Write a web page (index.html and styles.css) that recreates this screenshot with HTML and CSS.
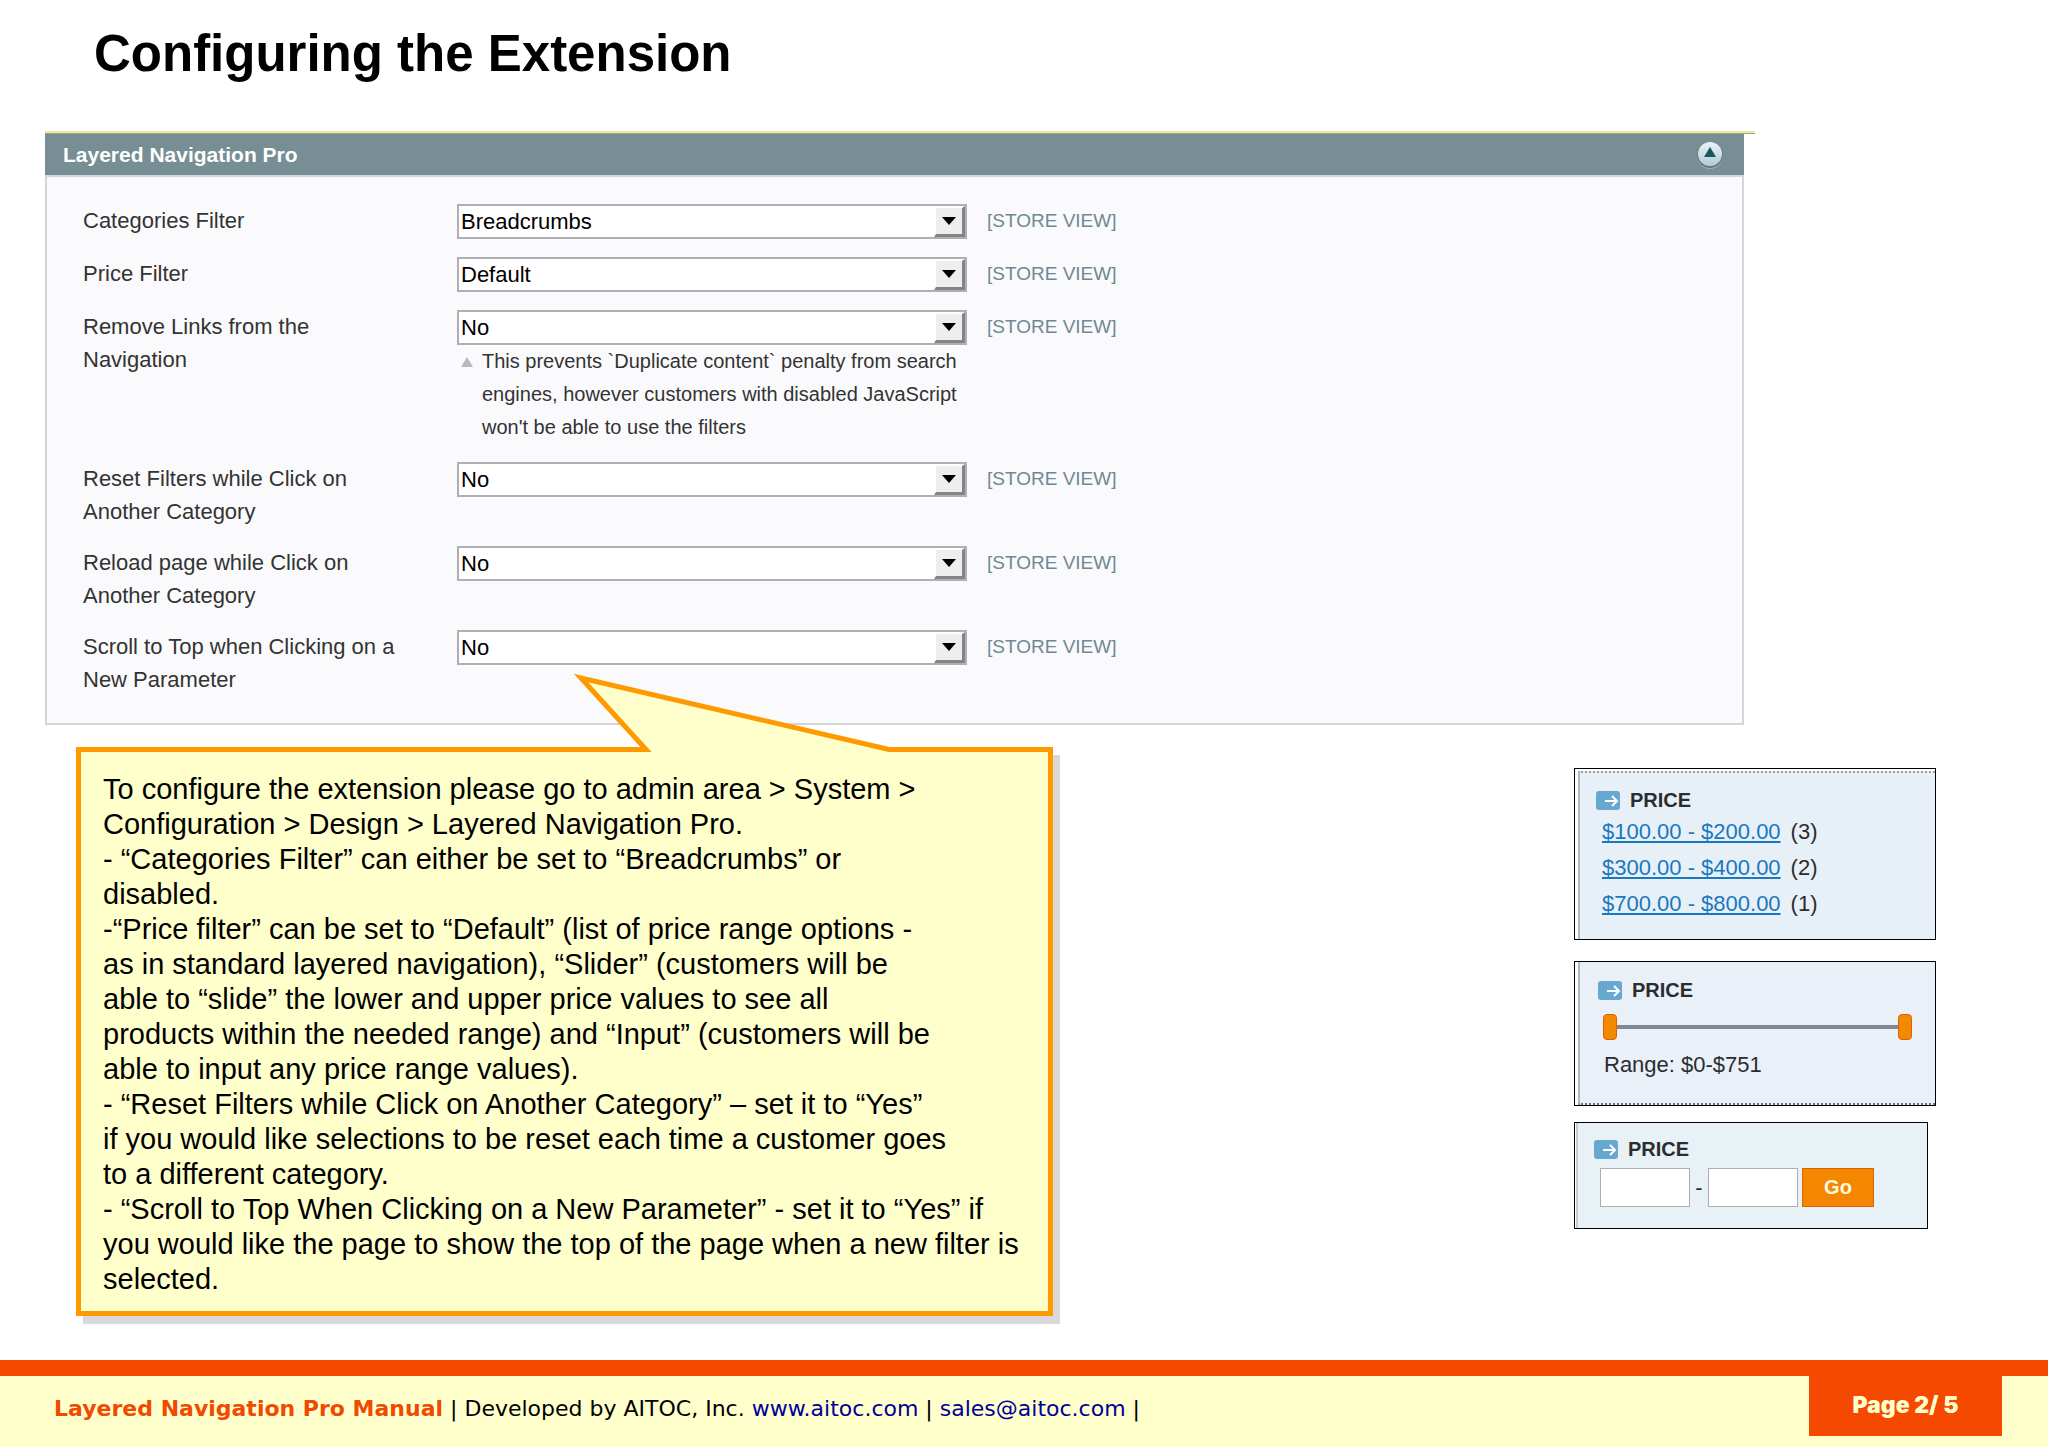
FILE: index.html
```html
<!DOCTYPE html>
<html lang="en">
<head>
<meta charset="utf-8">
<title>Configuring the Extension</title>
<link rel="stylesheet" href="styles.css">
</head>
<body>
<svg class="defs" aria-hidden="true">
  <symbol id="arrow-badge" viewBox="0 0 24 19">
    <rect width="24" height="19" rx="3" fill="#68a8d0"/>
    <path d="M9 10h12M16 5l5 5-5 5" fill="none" stroke="#fff" stroke-width="2"/>
  </symbol>
  <symbol id="drop-arrow" viewBox="0 0 14 8"><path d="M0 0h14L7 8z"/></symbol>
</svg>

<main class="page">
  <h1 class="title">Configuring the Extension</h1>
  <div class="rule"></div>

  <section class="panel">
    <header class="panel-head">
      <h2 class="panel-title">Layered Navigation Pro</h2>
      <button class="collapse" type="button" aria-label="Collapse section">
        <svg width="28" height="30" viewBox="0 0 28 30">
          <defs><linearGradient id="knob" x2="0" y2="1"><stop stop-color="#eaf3f8"/><stop offset="1" stop-color="#b4cad5"/></linearGradient></defs>
          <circle cx="14" cy="16" r="13" fill="#9db0b7"/>
          <circle cx="14" cy="15" r="13" fill="#5f7c85"/>
          <circle cx="14" cy="14" r="12" fill="url(#knob)"/>
          <path d="M14 7l6 10H8z" fill="#17585e"/>
        </svg>
      </button>
    </header>
    <form class="panel-body">
      <div class="row">
        <label class="label" for="categories">Categories Filter</label>
        <div class="field"><div class="select"><select id="categories"><option>Breadcrumbs</option></select><span class="drop"><svg><use href="#drop-arrow"/></svg></span></div></div>
        <span class="scope">[STORE VIEW]</span>
      </div>
      <div class="row">
        <label class="label" for="price">Price Filter</label>
        <div class="field"><div class="select"><select id="price"><option>Default</option></select><span class="drop"><svg><use href="#drop-arrow"/></svg></span></div></div>
        <span class="scope">[STORE VIEW]</span>
      </div>
      <div class="row">
        <label class="label" for="links">Remove Links from the Navigation</label>
        <div class="field">
          <div class="select"><select id="links"><option>No</option></select><span class="drop"><svg><use href="#drop-arrow"/></svg></span></div>
          <p class="hint"><svg class="hint-mark" viewBox="0 0 12 10"><path d="M6 0l6 10H0z"/></svg><span>This prevents `Duplicate content` penalty from search<br>engines, however customers with disabled JavaScript<br>won't be able to use the filters</span></p>
        </div>
        <span class="scope">[STORE VIEW]</span>
      </div>
      <div class="row">
        <label class="label" for="reset">Reset Filters while Click on Another Category</label>
        <div class="field"><div class="select"><select id="reset"><option>No</option></select><span class="drop"><svg><use href="#drop-arrow"/></svg></span></div></div>
        <span class="scope">[STORE VIEW]</span>
      </div>
      <div class="row">
        <label class="label" for="reload">Reload page while Click on Another Category</label>
        <div class="field"><div class="select"><select id="reload"><option>No</option></select><span class="drop"><svg><use href="#drop-arrow"/></svg></span></div></div>
        <span class="scope">[STORE VIEW]</span>
      </div>
      <div class="row">
        <label class="label" for="scroll">Scroll to Top when Clicking on a New Parameter</label>
        <div class="field"><div class="select"><select id="scroll"><option>No</option></select><span class="drop"><svg><use href="#drop-arrow"/></svg></span></div></div>
        <span class="scope">[STORE VIEW]</span>
      </div>
    </form>
  </section>

  <div class="lower">
    <div class="callout">
      <svg class="tail" width="340" height="88" viewBox="0 0 340 88" aria-hidden="true">
        <path d="M81 82.500L16 11l308 71.500L322 87H84z" fill="#ffffcc"/>
        <path d="M60 82.500h21L16 11l308 71.500h16" fill="none" stroke="#ff9900" stroke-width="5" stroke-miterlimit="10"/>
      </svg>
      <p class="callout-text">To configure the extension please go to admin area &gt; System &gt;<br>
      Configuration &gt; Design &gt; Layered Navigation Pro.<br>
      - “Categories Filter” can either be set to “Breadcrumbs” or<br>
      disabled.<br>
      -“Price filter” can be set to “Default” (list of price range options -<br>
      as in standard layered navigation), “Slider” (customers will be<br>
      able to “slide” the lower and upper price values to see all<br>
      products within the needed range) and “Input” (customers will be<br>
      able to input any price range values).<br>
      - “Reset Filters while Click on Another Category” – set it to “Yes”<br>
      if you would like selections to be reset each time a customer goes<br>
      to a different category.<br>
      - “Scroll to Top When Clicking on a New Parameter” - set it to “Yes” if<br>
      you would like the page to show the top of the page when a new filter is<br>
      selected.</p>
    </div>

    <aside class="samples">
      <section class="card card-list">
        <div class="card-inner">
          <h3 class="card-title"><svg class="badge"><use href="#arrow-badge"/></svg>PRICE</h3>
          <ul class="ranges">
            <li><a href="#">$100.00 - $200.00</a> <span>(3)</span></li>
            <li><a href="#">$300.00 - $400.00</a> <span>(2)</span></li>
            <li><a href="#">$700.00 - $800.00</a> <span>(1)</span></li>
          </ul>
        </div>
      </section>
      <section class="card card-slider">
        <div class="card-inner">
          <h3 class="card-title"><svg class="badge"><use href="#arrow-badge"/></svg>PRICE</h3>
          <div class="slider">
            <input type="range" min="0" max="751" value="0" aria-label="Lowest price">
            <input type="range" min="0" max="751" value="751" aria-label="Highest price">
          </div>
          <p class="range-text">Range: $0-$751</p>
        </div>
      </section>
      <section class="card card-input">
        <form class="card-inner">
          <h3 class="card-title"><svg class="badge"><use href="#arrow-badge"/></svg>PRICE</h3>
          <div class="inputs">
            <input type="text" aria-label="Price from">
            <span class="dash">-</span>
            <input type="text" aria-label="Price to">
            <button class="go" type="button">Go</button>
          </div>
        </form>
      </section>
    </aside>
  </div>
</main>

<footer class="footer">
  <p class="credits"><strong>Layered Navigation Pro Manual</strong> | Developed by AITOC, Inc. <a href="#">www.aitoc.com</a> | <a href="#">sales@aitoc.com</a> |</p>
  <div class="page-no">Page 2/ 5</div>
</footer>
</body>
</html>
```
FILE: styles.css
```css
* { box-sizing: border-box; }
body {
  margin: 0;
  min-height: 100vh;
  display: flex;
  flex-direction: column;
  background: #fff;
  color: #000;
  font: 22px/33px "Liberation Sans", Arial, sans-serif;
}
h1, h2, h3, p, ul { margin: 0; padding: 0; }
.defs { display: none; }

.page { flex: 1; padding: 24px 112px 0 45px; }
.title { padding-left: 49px; font-size: 51px; line-height: 60px; }
.rule { margin: 47px 181px 0 0; height: 3px; border-bottom: 1px solid #a9a36a; background: #eae8ae; }

/* Settings panel */
.panel { margin-right: 192px; }
.panel-head {
  display: flex;
  align-items: center;
  justify-content: space-between;
  height: 41px;
  padding: 0 20px 0 18px;
  background: #768e94;
}
.panel-title { font-size: 21px; line-height: 40px; color: #fff; }
.collapse { display: flex; padding: 0; border: 0; background: none; }
.panel-body {
  display: flex;
  flex-direction: column;
  gap: 18px;
  padding: 27px 36px;
  border: 2px solid #d3d6d9;
  border-top-color: #cfd9dd;
  background: #fafafc;
}
.row { display: grid; grid-template-columns: 354px 510px 1fr; column-gap: 20px; min-height: 35px; }
.label { width: 330px; color: #333; }
.select { display: grid; height: 35px; border: 2px solid #b0b0b4; background: #fff; }
.select select {
  grid-area: 1 / 1;
  appearance: none;
  width: 100%;
  padding: 0 2px;
  border: 0;
  background: none;
  color: #000;
  font: 22px "Liberation Sans", Arial, sans-serif;
}
.drop {
  grid-area: 1 / 1;
  justify-self: end;
  display: grid;
  place-items: center;
  width: 31px;
  border: 2px solid #fff;
  border-right: 3px solid #858385;
  border-bottom: 3px solid #858385;
  background: #efeeef;
  pointer-events: none;
}
.drop svg { width: 14px; height: 8px; }
.scope { font-size: 19px; line-height: 34px; color: #6f8992; }
.hint { display: flex; gap: 9px; padding-left: 4px; font-size: 20px; color: #333; }
.hint-mark { width: 12px; height: 10px; margin-top: 12px; fill: #b4bcbe; }

/* Callout and sample blocks */
.lower { display: flex; align-items: flex-start; justify-content: space-between; padding: 22px 0 35px 31px; }
.callout {
  position: relative;
  width: 977px;
  padding: 20px 20px 14px 22px;
  border: 5px solid #ff9900;
  background: #ffffcc;
  box-shadow: 7px 8px #d9d9db;
}
.tail { position: absolute; left: 484px; top: -85px; }
.callout-text { font-size: 29px; line-height: 35px; white-space: nowrap; }

.samples { display: flex; flex-direction: column; width: 362px; margin-top: 21px; }
.card { padding-left: 3px; border: 1px solid #000; background: #e8f0f7; background-clip: content-box; }
.card-inner { height: 100%; border-left: 2px solid #b4b6c2; }
.card-title { display: flex; align-items: center; gap: 10px; height: 27px; font-size: 20px; line-height: 27px; color: #2a2d30; }
.badge { width: 24px; height: 19px; }
.card-list { height: 172px; margin-bottom: 21px; padding-top: 2px; }
.card-list .card-inner { padding: 14px 15px 0 16px; border-top: 2px dotted #98a0a8; }
.ranges { list-style: none; padding-left: 6px; }
.ranges li { display: flex; gap: 10px; line-height: 36px; color: #2a2d30; }
.ranges a { color: #1878c0; }
.card-slider { height: 145px; margin-bottom: 16px; background-color: #eaf0f8; }
.card-slider .card-inner { padding: 15px 23px 0 18px; border-bottom: 2px dotted #70757c; }
.slider {
  display: grid;
  margin: 10px 0 0 5px;
  height: 26px;
  background: linear-gradient(#7f898f, #7f898f) center / 100% 4px no-repeat;
}
.slider input {
  grid-area: 1 / 1;
  appearance: none;
  width: 100%;
  height: 26px;
  margin: 0;
  background: none;
  pointer-events: none;
}
.slider input::-webkit-slider-thumb {
  appearance: none;
  width: 14px;
  height: 26px;
  border: 1px solid #e06000;
  border-radius: 4px;
  background: #f28a00;
  pointer-events: auto;
}
.range-text { padding: 8px 0 0 6px; color: #2a2d30; }
.card-input { width: 354px; height: 107px; padding-left: 1px; background-color: #e8f1f6; }
.card-input .card-inner { padding: 13px 17px 0 16px; border-left-color: #c4ccd2; }
.inputs { display: flex; align-items: center; margin: 5px 0 0 6px; }
.inputs input { width: 90px; height: 39px; border: 1px solid #a8adb8; background: #fff; }
.dash { width: 18px; text-align: center; color: #2a2d30; }
.go {
  width: 72px;
  height: 39px;
  margin-left: 4px;
  padding: 0;
  border: 1px solid #e06000;
  background: #f48600;
  color: #fffbe0;
  font: bold 20px "Liberation Sans", Arial, sans-serif;
}

/* Footer */
.footer {
  display: flex;
  justify-content: space-between;
  align-items: flex-start;
  height: 87px;
  padding: 0 46px 0 54px;
  border-top: 16px solid #f54800;
  background: #ffffcc;
}
.credits { padding-top: 16px; font: 22px/33px "DejaVu Sans", Verdana, sans-serif; }
.credits strong { color: #f04a00; }
.credits a { color: #000099; text-decoration: none; }
.page-no {
  width: 193px;
  height: 60px;
  background: #f54800;
  color: #ffffcc;
  font: 900 23px/58px Inter, sans-serif;
  text-align: center;
}
```
